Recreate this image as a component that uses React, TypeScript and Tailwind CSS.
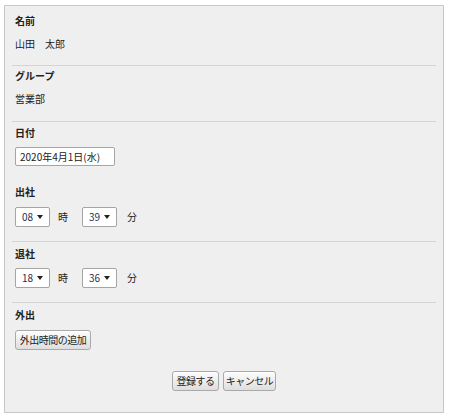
import { useState } from 'react';

const font = { fontFamily: '"Noto Sans CJK JP", "Noto Sans", sans-serif' };

function TimeSelect({ value, options }: { value: string; options: string[] }) {
  const [v, setV] = useState(value);
  return (
    <div className="relative h-[20px] w-[35px]">
      <select
        value={v}
        onChange={(e) => setV(e.target.value)}
        className="h-full w-full appearance-none rounded-[2px] border border-[#a5a5a5] bg-white pl-[6px] text-[10px] leading-4 text-[#1f2f55] outline-none"
        style={font}
      >
        {options.map((o) => (
          <option key={o} value={o}>
            {o}
          </option>
        ))}
      </select>
      <svg className="pointer-events-none absolute right-[7px] top-[8px]" width="6" height="4" viewBox="0 0 6 4">
        <path d="M0 0h6L3 4z" fill="#222" />
      </svg>
    </div>
  );
}

function Btn({ children, w }: { children: string; w: string }) {
  return (
    <button
      type="button"
      className={`h-[20px] ${w} whitespace-nowrap rounded-[3px] border border-[#a9a9a9] bg-gradient-to-b from-[#fdfdfd] to-[#dedede] px-0 text-[10px] leading-4 tracking-[-0.5px] text-[#222] shadow-[0_1px_0_#fff_inset]`}
      style={font}
    >
      {children}
    </button>
  );
}

const hours = Array.from({ length: 24 }, (_, i) => String(i).padStart(2, '0'));
const minutes = Array.from({ length: 60 }, (_, i) => String(i).padStart(2, '0'));

function TimeRow({ h, m }: { h: string; m: string }) {
  return (
    <div className="flex items-center">
      <TimeSelect value={h} options={hours} />
      <span className="ml-[8px]">時</span>
      <div className="ml-[14px]">
        <TimeSelect value={m} options={minutes} />
      </div>
      <span className="ml-[10px]">分</span>
    </div>
  );
}

export default function App() {
  return (
    <div className="min-h-[418px] bg-white pl-[4px] pt-[5px]" style={font}>
      <div className="w-[440px] border border-[#c8c8c8] bg-[#efefef] px-[7px] pb-[21px] text-[10px] leading-4 text-[#222]">
        <div className="border-b border-[#d4d4d4] px-[3px] pb-[13px] pt-[7px]">
          <div className="mb-[7px] font-bold">名前</div>
          <div>山田　太郎</div>
        </div>

        <div className="border-b border-[#d4d4d4] px-[3px] pb-[14px] pt-[2px]">
          <div className="mb-[7px] font-bold">グループ</div>
          <div>営業部</div>
        </div>

        <div className="border-b border-[#d4d4d4] px-[3px] pb-[14px] pt-[3px]">
          <div className="font-bold">日付</div>
          <input
            type="text"
            readOnly
            value="2020年4月1日(水)"
            className="mt-[6px] h-[19px] w-[100px] rounded-[2px] border border-[#a5a5a5] bg-white px-[4px] text-[10px] leading-4 text-[#222] outline-none"
            style={font}
          />
          <div className="mt-[18px] font-bold">出社</div>
          <div className="mt-[7px]">
            <TimeRow h="08" m="39" />
          </div>
        </div>

        <div className="border-b border-[#d4d4d4] px-[3px] pb-[14px] pt-[4px]">
          <div className="font-bold">退社</div>
          <div className="mt-[6px]">
            <TimeRow h="18" m="36" />
          </div>
        </div>

        <div className="px-[3px] pt-[4px]">
          <div className="font-bold">外出</div>
          <div className="mt-[7px]">
            <Btn w="w-[76px]">外出時間の追加</Btn>
          </div>
        </div>

        <div className="mt-[21px] flex justify-center gap-[4px]">
          <Btn w="w-[47px]">登録する</Btn>
          <Btn w="w-[53px]">キャンセル</Btn>
        </div>
      </div>
    </div>
  );
}
